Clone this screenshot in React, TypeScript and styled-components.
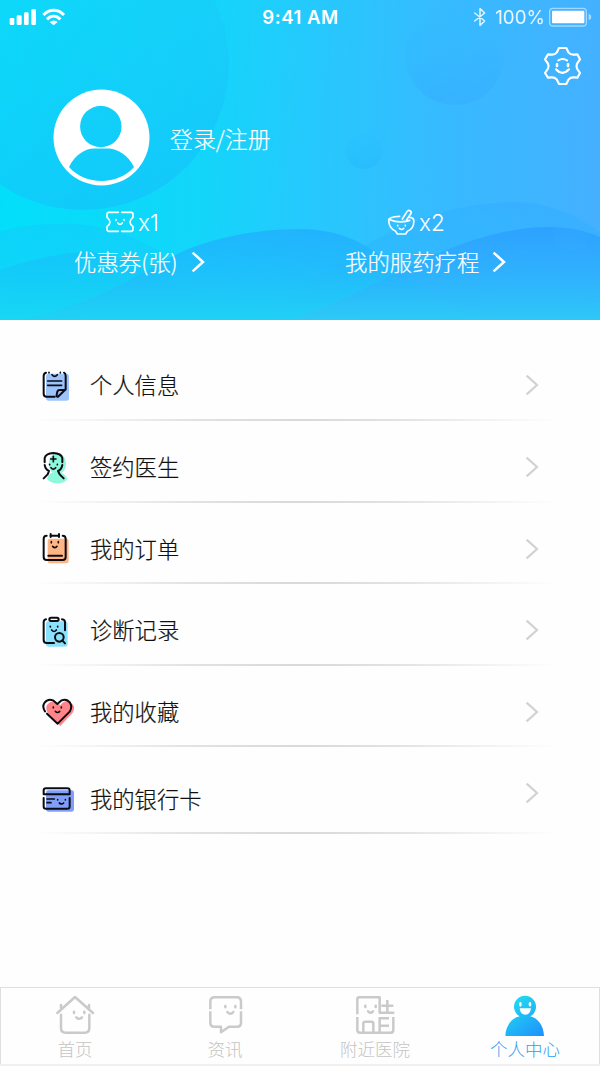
import React from 'react';
import styled, { createGlobalStyle } from 'styled-components';

const GlobalStyle = createGlobalStyle`
  * { box-sizing: border-box; }
  body {
    margin: 0;
    background: #fefefe;
    font-family: 'Noto Sans CJK SC', sans-serif;
    font-weight: 300;
  }
`;

const Screen = styled.div`
  width: 600px;
  height: 1067px;
  display: flex;
  flex-direction: column;
  overflow: hidden;
  background: #fefefe;
`;

const Header = styled.header`
  position: relative;
  height: 320px;
  flex: none;
  color: #fff;
  background: linear-gradient(92deg, #02dffa 0%, #12d6fa 33%, #24cafd 50%, #36bbff 72%, #45b0ff 100%);
`;

const Backdrop = styled.svg`
  position: absolute;
  inset: 0;
`;

const HeaderContent = styled.div`
  position: relative;
  height: 100%;
  display: flex;
  flex-direction: column;
`;

const StatusBar = styled.div`
  height: 32px;
  padding: 0 8px 0 9px;
  display: grid;
  grid-template-columns: 1fr auto 1fr;
  align-items: center;
  font-family: Inter, sans-serif;
`;

const StatusSide = styled.div<{ $end?: boolean }>`
  display: flex;
  align-items: center;
  justify-content: ${(p) => (p.$end ? 'flex-end' : 'flex-start')};
`;

const Clock = styled.div`
  font-size: 18.6px;
  font-weight: 600;
  letter-spacing: 0.5px;
  line-height: 32px;
  white-space: nowrap;
`;

const BatteryLevel = styled.span`
  font-size: 18.8px;
  font-weight: 400;
  line-height: 32px;
  padding-top: 2px;
  margin: 0 4px 0 8px;
  opacity: 0.88;
`;

const SettingsRow = styled.div`
  display: flex;
  justify-content: flex-end;
  height: 57px;
  padding: 14px 17px 0 0;
`;

const Profile = styled.div`
  display: flex;
  align-items: center;
  height: 97px;
  padding-left: 53px;
  gap: 20px;
`;

const LoginLabel = styled.div`
  font-size: 22.9px;
  line-height: 34px;
  -webkit-text-stroke: 0.2px currentColor;
`;

const Stats = styled.div`
  display: flex;
  padding-top: 20px;
`;

const Stat = styled.div<{ $inset: number }>`
  width: 50%;
  display: flex;
  flex-direction: column;
  padding-left: ${(p) => p.$inset}px;
  padding-top: 2px;
`;

const StatCount = styled.div<{ $indent: number }>`
  display: flex;
  align-items: center;
  gap: 4px;
  height: 28px;
  padding-left: ${(p) => p.$indent}px;
  font-family: Inter, sans-serif;
  font-size: 22.5px;
  font-weight: 300;
`;

const StatLabel = styled.div`
  display: flex;
  align-items: center;
  gap: 13px;
  font-size: 22.4px;
  line-height: 34px;
  margin-top: 10px;
  white-space: nowrap;
  -webkit-text-stroke: 0.2px currentColor;
`;

const StatText = styled.span`
  margin-top: -2px;
`;

const List = styled.main`
  flex: 1;
  padding-top: 19px;
`;

const Row = styled.div<{ $height: number }>`
  height: ${(p) => p.$height}px;
  display: flex;
  align-items: flex-start;
  padding: 29px 61px 0 42px;
  background: linear-gradient(
      90deg,
      rgba(215, 215, 215, 0) 6%,
      #e2e2e2 32%,
      #d9d9d9 50%,
      #e2e2e2 66%,
      rgba(215, 215, 215, 0) 93%
    )
    bottom / 100% 2px no-repeat;
`;

const IconBox = styled.div<{ $shift: number }>`
  width: 48px;
  height: 34px;
  margin-top: ${(p) => p.$shift}px;
`;

const RowLabel = styled.div<{ $shift: number }>`
  flex: 1;
  font-size: 22.3px;
  line-height: 34px;
  margin-top: ${(p) => p.$shift - 1}px;
  color: #101010;
  -webkit-text-stroke: 0.2px currentColor;
`;

const RowArrow = styled.div`
  height: 34px;
  display: flex;
  align-items: center;
`;

const TabBar = styled.nav`
  height: 79px;
  flex: none;
  margin-bottom: 1px;
  display: flex;
  border-top: 1px solid #dfdfdf;
  border-bottom: 2px solid #efefef;
  box-shadow: inset 1px 0 #dfdfdf, inset -1px 0 #dfdfdf;
`;

const Tab = styled.div<{ $active?: boolean }>`
  flex: 1;
  display: flex;
  flex-direction: column;
  align-items: center;
  padding-top: 6px;
  font-size: 17.5px;
  line-height: 25px;
  color: ${(p) => (p.$active ? '#2e9ff5' : '#c4c4c4')};
`;

const TabIcon = styled.svg`
  display: block;
  width: 42px;
  height: 42px;
`;

const line = {
  fill: 'none',
  strokeLinecap: 'round' as const,
  strokeLinejoin: 'round' as const,
};

function Waves() {
  return (
    <Backdrop width="600" height="320" viewBox="0 0 600 320">
      <defs>
        <linearGradient id="bigDisc" x1="0.3" y1="0" x2="0.65" y2="1">
          <stop offset="0.2" stopColor="#1ccef9" stopOpacity="0.4" />
          <stop offset="1" stopColor="#14c1fa" stopOpacity="0.66" />
        </linearGradient>
        <linearGradient id="disc" x1="0" y1="0" x2="0" y2="1">
          <stop offset="0" stopColor="#2fbcfd" stopOpacity="0.1" />
          <stop offset="1" stopColor="#36abff" stopOpacity="0.55" />
        </linearGradient>
        <linearGradient id="smallDisc" x1="0" y1="0" x2="0" y2="1">
          <stop offset="0" stopColor="#22bcfd" stopOpacity="0.1" />
          <stop offset="1" stopColor="#24b4fd" stopOpacity="0.45" />
        </linearGradient>
        <linearGradient id="backWave" gradientUnits="userSpaceOnUse" x1="0" y1="202" x2="0" y2="320">
          <stop offset="0" stopColor="#2ca8ff" stopOpacity="0.34" />
          <stop offset="1" stopColor="#28c8fa" stopOpacity="0.6" />
        </linearGradient>
        <linearGradient id="leftWave" gradientUnits="userSpaceOnUse" x1="0" y1="222" x2="0" y2="320">
          <stop offset="0" stopColor="#14c6fb" stopOpacity="0.45" />
          <stop offset="1" stopColor="#1ad6f4" stopOpacity="0.6" />
        </linearGradient>
        <linearGradient id="leftFrontWave" gradientUnits="userSpaceOnUse" x1="0" y1="250" x2="0" y2="320">
          <stop offset="0" stopColor="#16bcfb" stopOpacity="0.55" />
          <stop offset="1" stopColor="#18d8f3" stopOpacity="0.8" />
        </linearGradient>
        <linearGradient id="centerWave" gradientUnits="userSpaceOnUse" x1="0" y1="227" x2="0" y2="320">
          <stop offset="0" stopColor="#20abfe" stopOpacity="0.74" />
          <stop offset="0.45" stopColor="#1fb8fc" stopOpacity="0.7" />
          <stop offset="1" stopColor="#20d2f4" stopOpacity="0.9" />
        </linearGradient>
        <linearGradient id="rightWave" gradientUnits="userSpaceOnUse" x1="0" y1="227" x2="0" y2="320">
          <stop offset="0" stopColor="#2a9bff" stopOpacity="0.72" />
          <stop offset="0.45" stopColor="#2cabfe" stopOpacity="0.65" />
          <stop offset="1" stopColor="#2ec9f7" stopOpacity="0.9" />
        </linearGradient>
      </defs>
      <circle cx="83" cy="64" r="146" fill="url(#bigDisc)" />
      <circle cx="455" cy="55.500" r="49.500" fill="url(#disc)" />
      <circle cx="364" cy="151" r="18" fill="url(#smallDisc)" />
      <path d="M0 231C42 221 88 221 124 234C176 253 205 293 290 320H0Z" fill="url(#leftWave)" />
      <path d="M0 270C30 260 58 253 86 252C142 253 150 290 270 320H0Z" fill="url(#leftFrontWave)" />
      <path d="M320 275C375 235 440 203 512 202C548 202 576 215 600 232V320H250C275 305 300 289 320 275Z" fill="url(#backWave)" />
      <path d="M20 320C105 302 150 266 188 249C220 236 260 229 302 229C384 231 395 286 480 320Z" fill="url(#centerWave)" />
      <path d="M290 320C345 301 390 275 430 257C468 240 510 227 548 227C570 227 586 231 600 237V320Z" fill="url(#rightWave)" />
      <circle cx="571" cy="232" r="18.500" fill="url(#disc)" opacity="0.5" />
    </Backdrop>
  );
}

function Chevron({ color, width = 2.2 }: { color: string; width?: number }) {
  return (
    <svg width="14" height="22" viewBox="0 0 14 22">
      <path d="M1.600 1.600L12 11L1.600 20.400" fill="none" stroke={color} strokeWidth={width} />
    </svg>
  );
}

function Signal() {
  return (
    <svg width="57" height="18" viewBox="27 21 171 54" fill="#fff">
      <rect x="29" y="51" width="14" height="21" rx="4" />
      <rect x="50" y="43" width="15" height="29" rx="4" />
      <rect x="72" y="34" width="14" height="38" rx="4" />
      <rect x="94" y="24" width="14" height="48" rx="4" />
      <g fill="none" stroke="#fff" strokeWidth="9">
        <path d="M130 42C148 23 174 23 192 42" />
        <path d="M141 55C153 43 169 43 181 55" />
      </g>
      <path d="M149 63C157 57 165 57 173 63L161 73Z" />
    </svg>
  );
}

function Bluetooth() {
  return (
    <svg width="14" height="20" viewBox="519 18 42 60">
      <path d="M524 36L554 60L540 73V23L554 36L524 60" {...line} stroke="#fff" strokeWidth="4.500" opacity="0.85" />
    </svg>
  );
}

function Battery() {
  return (
    <svg width="43" height="20" viewBox="747 19 129 60">
      <rect x="749" y="23" width="110" height="53" rx="10" fill="none" stroke="#fff" strokeOpacity="0.5" strokeWidth="4" />
      <rect x="756" y="30" width="97" height="38" rx="3" fill="#fff" />
      <path d="M866 39Q874 42 874 49T866 59Z" fill="#fff" opacity="0.55" />
    </svg>
  );
}

function SettingsIcon() {
  return (
    <svg width="40" height="40" viewBox="729 139 120 120">
      <g {...line} stroke="#fff" strokeWidth="6.500">
        <path d="M777 145H799L806 159Q812 166 822 165L832 164L840 179L831 192Q828 200 831 207L840 220L832 234L822 233Q812 232 806 239L799 253H777L770 239Q764 232 754 233L744 234L735 220L744 207Q748 200 744 192L735 179L744 164L754 165Q764 166 770 159Z" />
        <path d="M775 182Q788 174 801 182M768 209Q787 230 807 209" />
        <path d="M771 194V199M804 194V199" strokeWidth="8" />
      </g>
    </svg>
  );
}

function Avatar() {
  return (
    <svg width="97" height="97" viewBox="0 0 97 97">
      <defs>
        <mask id="person">
          <rect width="97" height="97" fill="#fff" />
          <circle cx="47.800" cy="37.500" r="20.700" fill="#000" />
          <path d="M16 78C22 65 33 59.500 41 59.500H55C64 59.500 75 66 81 78C66 96 32 97 16 78Z" fill="#000" />
        </mask>
      </defs>
      <circle cx="48.500" cy="48.500" r="48" fill="#fff" mask="url(#person)" />
    </svg>
  );
}

function CouponIcon() {
  return (
    <svg width="28" height="22" viewBox="318 152 84 66">
      <g {...line} stroke="#fff" strokeWidth="5">
        <path d="M355 156H327Q321 156 321 162V171Q330 178 330 185T321 199V207Q321 213 327 213H355M365 156H393Q399 156 399 162V171Q390 178 390 185T399 199V207Q399 213 393 213H365M353 188Q360 196 367 188" />
        <path d="M348 178V180M372 178V180" />
      </g>
    </svg>
  );
}

function MortarIcon() {
  return (
    <svg width="28" height="27" viewBox="262 138 84 81">
      <g {...line} stroke="#fff" strokeWidth="5">
        <path d="M300 160C278 161 267 165 267 171C267 187 276 201 288 205L293 213H318L323 205C337 200 344 187 342 170Q340 163 330 163" />
        <path d="M271 170Q298 182 330 172M308 168L322 146Q326 140 332 144Q337 148 333 153L321 170" />
        <path d="M299 196Q306 203 312 196M294 187V188M317 187V188" />
      </g>
    </svg>
  );
}

function NoteIcon() {
  return (
    <svg width="28" height="34" viewBox="36 28 84 102">
      <rect x="48" y="42" width="69" height="81" rx="8" fill="#9dc3fb" />
      <g {...line} stroke="#0b0b12" strokeWidth="6">
        <path d="M48 39Q41 41 41 49V102Q41 111 50 111H74M102 39Q107 41 107 49V89L84 111Q79 112 80 105L82 96Q83 91 90 91H106" />
        <path d="M57 38V40M91 38V40M66 45Q74 55 82 45" strokeWidth="5" />
        <path d="M53 64H95M53 77H95" strokeWidth="5" />
      </g>
    </svg>
  );
}

function DoctorIcon() {
  return (
    <svg width="28" height="34" viewBox="36 270 84 102">
      <ellipse cx="82" cy="311" rx="26" ry="32" fill="#8df8dc" />
      <path d="M51 356Q57 335 80 335Q105 337 112 356Q105 370 80 370Q60 369 51 356Z" fill="#8df8dc" />
      <g {...line} stroke="#0b0b12" strokeWidth="6">
        <path d="M44 307V294Q47 280 70 279Q93 280 97 294V307M44 315Q47 329 57 333L53 343L41 355M97 315Q94 329 84 333L89 343L101 355" />
        <path d="M70 289V305M62 297H78M63 323Q70 332 77 323M59 313V314M82 313V314" strokeWidth="5" />
      </g>
    </svg>
  );
}

function OrderIcon() {
  return (
    <svg width="28" height="34" viewBox="36 37 84 102">
      <rect x="53" y="57" width="63" height="74" rx="7" fill="#ffb584" />
      <g {...line} stroke="#0b0b12" strokeWidth="6">
        <path d="M50 48Q41 48 41 58V112Q41 121 50 121H98Q107 121 107 112V58Q107 48 98 48M62 48H87" />
        <path d="M62 43V52M87 43V52M55 108H96" />
        <path d="M64 66V69M85 66V69M68 80Q75 88 81 80" strokeWidth="5" />
      </g>
    </svg>
  );
}

function RecordIcon() {
  return (
    <svg width="28" height="34" viewBox="36 283 84 102">
      <rect x="48" y="305" width="65" height="76" rx="7" fill="#8be1fb" />
      <g {...line} stroke="#0b0b12" strokeWidth="6">
        <path d="M48 299Q41 300 41 308V361Q41 370 50 370H72M96 299Q105 300 105 308V332" />
        <rect x="58" y="294" width="28" height="10" rx="5" />
        <circle cx="88" cy="353" r="13" />
        <path d="M97 362L105 371" />
        <path d="M61 320V322M83 320V322M65 331Q72 340 79 331" strokeWidth="5" />
      </g>
    </svg>
  );
}

function HeartIcon() {
  return (
    <svg width="34" height="34" viewBox="36 30 102 102">
      <path d="M91 123L56 88Q43 70 53 58Q66 43 82 53L91 61Q103 44 118 51Q140 63 128 83Z" fill="#ff8589" />
      <g {...line} stroke="#0b0b12" strokeWidth="6">
        <path d="M45 79Q36 66 43 54Q53 40 69 46L82 57L95 46Q110 40 120 53Q128 66 119 80L83 116L51 86" />
        <path d="M70 66V68M94 66V68M76 79Q83 86 89 79" strokeWidth="5" />
      </g>
    </svg>
  );
}

function CardIcon() {
  return (
    <svg width="34" height="34" viewBox="36 292 102 102">
      <rect x="48" y="317" width="84" height="64" rx="7" fill="#7f9ffa" />
      <g {...line} stroke="#0b0b12" strokeWidth="6">
        <path d="M41 329V317Q41 311 48 311H112Q119 311 119 317V329ZM41 340V366Q41 372 48 372H112Q119 372 119 366V340" />
        <path d="M51 343H73M51 354H63M88 355Q95 361 101 355M83 345V346M106 345V346" strokeWidth="5" />
      </g>
    </svg>
  );
}

function HomeIcon() {
  return (
    <TabIcon viewBox="162 42 126 126">
      <g {...line} stroke="#cacaca" strokeWidth="7.500">
        <path d="M172 99L225 51L279 99M183 75V84M267 75V84M183 104V144Q183 158 197 158H254Q268 158 268 144V104" />
        <path d="M229 112Q237 121 246 112M222 95V99M253 95V99" />
      </g>
    </TabIcon>
  );
}

function NewsIcon() {
  return (
    <TabIcon viewBox="612 42 126 126">
      <g {...line} stroke="#cacaca" strokeWidth="7.500" strokeLinecap="butt">
        <path d="M631 88V65Q631 52 644 52H710Q723 52 723 65V88M631 94V128Q631 140 643 140H663V157L687 140H711Q723 140 723 128V94" />
        <path d="M682 96Q691 107 700 96M676 78V82M706 78V82" strokeLinecap="round" />
      </g>
    </TabIcon>
  );
}

function HospitalIcon() {
  return (
    <TabIcon viewBox="162 42 126 126">
      <g {...line} stroke="#cacaca" strokeWidth="7.500" strokeLinecap="butt">
        <path d="M172 103V58Q172 52 178 52H239V98H283M262 60V96M244 77H280" />
        <path d="M172 111V150Q172 158 180 158H272Q280 158 280 150V111M190 158V131Q190 125 196 125H214Q220 125 220 131V158M239 111V158M239 115H267M239 137H267" />
        <path d="M204 94Q211 103 219 94M196 77V81M227 77V81" strokeLinecap="round" />
      </g>
    </TabIcon>
  );
}

function MeIcon() {
  return (
    <TabIcon viewBox="612 42 126 126">
      <defs>
        <linearGradient id="me" gradientUnits="userSpaceOnUse" x1="640" y1="55" x2="725" y2="170">
          <stop offset="0" stopColor="#21dcee" />
          <stop offset="1" stopColor="#1e90ff" />
        </linearGradient>
      </defs>
      <path d="M616 168C617 135 638 113 659 109A33 33 0 1 1 691 109C713 114 731 136 732 168Z" fill="url(#me)" />
      <g fill="#fff">
        <ellipse cx="661" cy="73" rx="4" ry="7" />
        <ellipse cx="690" cy="73" rx="4" ry="7" />
        <path d="M659 85H693Q691 104 676 104T659 85Z" />
      </g>
    </TabIcon>
  );
}

const rows = [
  { label: '个人信息', icon: <NoteIcon />, height: 82, iconShift: 1, textShift: 0 },
  { label: '签约医生', icon: <DoctorIcon />, height: 82, iconShift: 0, textShift: 0 },
  { label: '我的订单', icon: <OrderIcon />, height: 81, iconShift: 0, textShift: 0 },
  { label: '诊断记录', icon: <RecordIcon />, height: 82, iconShift: 1, textShift: 0 },
  { label: '我的收藏', icon: <HeartIcon />, height: 81, iconShift: 0, textShift: 0 },
  { label: '我的银行卡', icon: <CardIcon />, height: 87, iconShift: 6, textShift: 6 },
];

export default function App() {
  return (
    <Screen>
      <GlobalStyle />
      <Header>
        <Waves />
        <HeaderContent>
          <StatusBar>
            <StatusSide><Signal /></StatusSide>
            <Clock>9:41 AM</Clock>
            <StatusSide $end>
              <Bluetooth />
              <BatteryLevel>100%</BatteryLevel>
              <Battery />
            </StatusSide>
          </StatusBar>
          <SettingsRow><SettingsIcon /></SettingsRow>
          <Profile>
            <Avatar />
            <LoginLabel>登录/注册</LoginLabel>
          </Profile>
          <Stats>
            <Stat $inset={74}>
              <StatCount $indent={32}><CouponIcon />x1</StatCount>
              <StatLabel><StatText>优惠券(张)</StatText><Chevron color="#fff" width={2.5} /></StatLabel>
            </Stat>
            <Stat $inset={45}>
              <StatCount $indent={42}><MortarIcon />x2</StatCount>
              <StatLabel><StatText>我的服药疗程</StatText><Chevron color="#fff" width={2.5} /></StatLabel>
            </Stat>
          </Stats>
        </HeaderContent>
      </Header>
      <List>
        {rows.map((r) => (
          <Row key={r.label} $height={r.height}>
            <IconBox $shift={r.iconShift}>{r.icon}</IconBox>
            <RowLabel $shift={r.textShift}>{r.label}</RowLabel>
            <RowArrow><Chevron color="#d2d2d2" /></RowArrow>
          </Row>
        ))}
      </List>
      <TabBar>
        <Tab><HomeIcon />首页</Tab>
        <Tab><NewsIcon />资讯</Tab>
        <Tab><HospitalIcon />附近医院</Tab>
        <Tab $active><MeIcon />个人中心</Tab>
      </TabBar>
    </Screen>
  );
}
